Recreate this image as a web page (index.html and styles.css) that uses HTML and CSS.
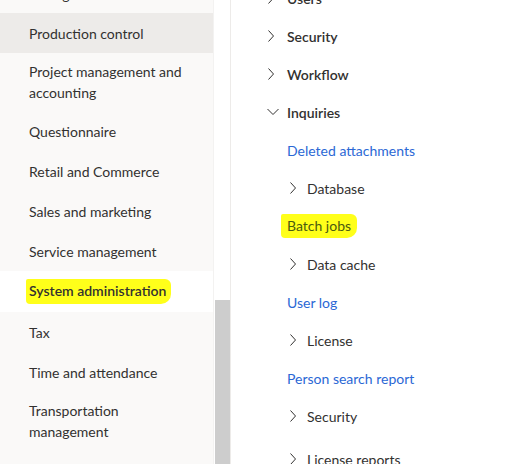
FILE: index.html
```html
<!DOCTYPE html>
<html>
<head>
  <link rel="stylesheet" href="styles.css">
</head>
<body>
  <div class="page">
    <nav class="modules">
      <ul class="module-list">
        <li class="module">Warehouse<br>management</li>
        <li class="module hover">Production control</li>
        <li class="module">Project management and<br>accounting</li>
        <li class="module">Questionnaire</li>
        <li class="module">Retail and Commerce</li>
        <li class="module">Sales and marketing</li>
        <li class="module">Service management</li>
        <li class="module selected"><span class="marker marker-wide">System administration</span></li>
        <li class="module">Tax</li>
        <li class="module">Time and attendance</li>
        <li class="module">Transportation<br>management</li>
        <li class="module">Vendor collaboration</li>
      </ul>
    </nav>
    <div class="scrollbar">
      <div class="track"></div>
      <div class="thumb"></div>
    </div>
    <main class="menu">
      <ul class="tree">
        <li class="group">
          <svg class="chev" width="20" height="12" viewBox="0 0 20 12"><path d="M1.5 0.5 L6.5 6 L1.5 11.5" /></svg>
          <span>Users</span>
        </li>
        <li class="group">
          <svg class="chev" width="20" height="12" viewBox="0 0 20 12"><path d="M1.5 0.5 L6.5 6 L1.5 11.5" /></svg>
          <span>Security</span>
        </li>
        <li class="group">
          <svg class="chev" width="20" height="12" viewBox="0 0 20 12"><path d="M1.5 0.5 L6.5 6 L1.5 11.5" /></svg>
          <span>Workflow</span>
        </li>
        <li class="group">
          <svg class="chev" width="20" height="12" viewBox="0 0 20 12"><path d="M0.5 3 L6 8.5 L11.5 3" /></svg>
          <span>Inquiries</span>
        </li>
        <li class="link">Deleted attachments</li>
        <li class="subgroup">
          <svg class="chev" width="18" height="12" viewBox="0 0 18 12"><path d="M1.5 0.5 L6.5 6 L1.5 11.5" /></svg>
          <span>Database</span>
        </li>
        <li class="link"><span class="marker">Batch jobs</span></li>
        <li class="subgroup">
          <svg class="chev" width="18" height="12" viewBox="0 0 18 12"><path d="M1.5 0.5 L6.5 6 L1.5 11.5" /></svg>
          <span>Data cache</span>
        </li>
        <li class="link">User log</li>
        <li class="subgroup">
          <svg class="chev" width="18" height="12" viewBox="0 0 18 12"><path d="M1.5 0.5 L6.5 6 L1.5 11.5" /></svg>
          <span>License</span>
        </li>
        <li class="link">Person search report</li>
        <li class="subgroup">
          <svg class="chev" width="18" height="12" viewBox="0 0 18 12"><path d="M1.5 0.5 L6.5 6 L1.5 11.5" /></svg>
          <span>Security</span>
        </li>
        <li class="subgroup last">
          <svg class="chev" width="18" height="12" viewBox="0 0 18 12"><path d="M1.5 0.5 L6.5 6 L1.5 11.5" /></svg>
          <span>License reports</span>
        </li>
      </ul>
    </main>
  </div>
</body>
</html>
```

FILE: styles.css
```css
html, body {
  margin: 0;
  height: 100%;
  overflow: hidden;
}
body {
  font-family: Lato, "Liberation Sans", sans-serif;
  font-size: 14px;
  color: #323130;
  background: #fff;
}
.page {
  display: flex;
  height: 464px;
}
.modules {
  width: 213px;
  background: #faf9f8;
  border-right: 1px solid #f3f2f1;
  overflow: hidden;
}
.module-list {
  list-style: none;
  margin: -45px 0 0 0;
  padding: 0;
}
.module {
  display: flex;
  align-items: center;
  min-height: 40px;
  box-sizing: border-box;
  padding: 8px 10px 8px 29px;
  line-height: 21px;
}
.module.hover {
  background: #edebe9;
}
.module.selected {
  background: #fff;
  font-weight: 600;
}
.marker {
  background: #ffff1a;
  padding: 1px 3px 3px 3px;
  margin-left: -3px;
  border-radius: 2px 6px 10px 4px;
}
.marker-wide {
  padding-right: 5px;
}
.scrollbar {
  width: 16px;
  display: flex;
  flex-direction: column;
  border-right: 1px solid #edebe9;
}
.track {
  height: 300px;
  background: #fff;
}
.thumb {
  flex: 1;
  margin-left: 1px;
  background: #cdcdcd;
}
.menu {
  flex: 1;
  overflow: hidden;
}
.tree {
  list-style: none;
  margin: -21px 0 0 0;
  padding: 0;
}
.tree li {
  display: flex;
  align-items: center;
  height: 38px;
}
.tree li.last {
  margin-top: 5px;
}
.chev {
  flex: none;
}
.chev path {
  fill: none;
  stroke: #323130;
  stroke-width: 1;
}
.group {
  padding-left: 36px;
  font-weight: 600;
}
.link {
  padding-left: 56px;
  color: #2b68d5;
}
.link .marker {
  color: #4a5a10;
  margin-left: -6px;
  padding: 3px 6px 4px 6px;
}
.subgroup {
  padding-left: 58px;
}
```
